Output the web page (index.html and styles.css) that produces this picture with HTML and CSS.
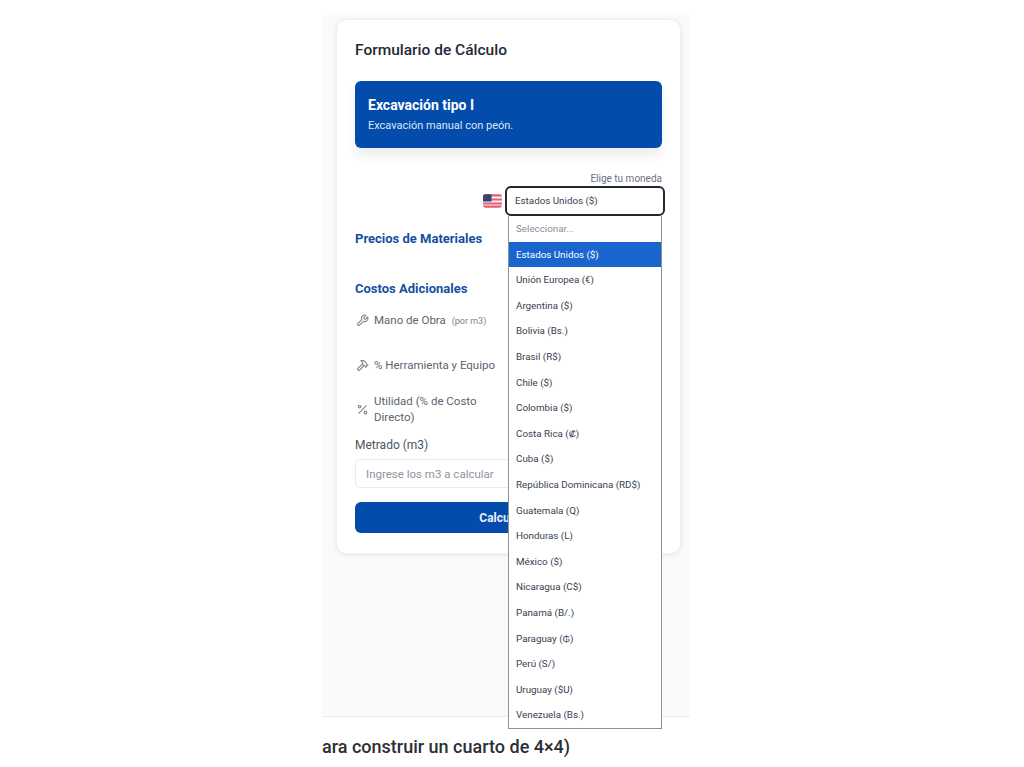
FILE: index.html
```html
<!DOCTYPE html>
<html lang="es">
<head>
    <meta charset="UTF-8">
    <meta name="viewport" content="width=device-width, initial-scale=1.0">
    <title>Formulario de Cálculo</title>
    <link rel="stylesheet" href="styles.css">
</head>
<body>
    <div class="frame">
        <div class="card">
            <h2 class="card-title">Formulario de Cálculo</h2>
            <div class="banner">
                <h3>Excavación tipo I</h3>
                <p>Excavación manual con peón.</p>
            </div>
            <div class="currency">
                <span class="currency-label">Elige tu moneda</span>
                <div class="currency-row">
                    <svg class="flag" viewBox="0 0 20 14">
                        <rect width="20" height="14" rx="2.5" fill="#f6f0f2"/>
                        <path d="M2.5 0h15A2.5 2.5 0 0 1 20 2.2H0A2.5 2.5 0 0 1 2.5 0zM0 4.4h20v2H0zM0 8.6h20v2H0zM0 11.8h20A2.5 2.5 0 0 1 17.5 14h-15A2.5 2.5 0 0 1 0 11.8z" fill="#e0606f"/>
                        <path d="M2.5 0H9v7.4H0V2.5A2.5 2.5 0 0 1 2.5 0z" fill="#34466f"/>
                    </svg>
                    <div class="select">Estados Unidos ($)
                        <ul class="menu">
                            <li class="placeholder">Seleccionar...</li>
                            <li class="active">Estados Unidos ($)</li>
                            <li>Unión Europea (€)</li>
                            <li>Argentina ($)</li>
                            <li>Bolivia (Bs.)</li>
                            <li>Brasil (R$)</li>
                            <li>Chile ($)</li>
                            <li>Colombia ($)</li>
                            <li>Costa Rica (₡)</li>
                            <li>Cuba ($)</li>
                            <li>República Dominicana (RD$)</li>
                            <li>Guatemala (Q)</li>
                            <li>Honduras (L)</li>
                            <li>México ($)</li>
                            <li>Nicaragua (C$)</li>
                            <li>Panamá (B/.)</li>
                            <li>Paraguay (₲)</li>
                            <li>Perú (S/)</li>
                            <li>Uruguay ($U)</li>
                            <li>Venezuela (Bs.)</li>
                        </ul>
                    </div>
                </div>
            </div>
            <h4 class="section materials">Precios de Materiales</h4>
            <h4 class="section costs">Costos Adicionales</h4>
            <div class="cost-row labor">
                <svg class="icon" viewBox="0 0 24 24"><path d="M14.7 6.3a1 1 0 0 0 0 1.4l1.6 1.6a1 1 0 0 0 1.4 0l3.77-3.77a6 6 0 0 1-7.94 7.94l-6.91 6.91a2.12 2.12 0 0 1-3-3l6.91-6.91a6 6 0 0 1 7.94-7.94l-3.76 3.76z"/></svg>
                <span>Mano de Obra <small>(por m3)</small></span>
            </div>
            <div class="cost-row tools">
                <svg class="icon" viewBox="0 0 24 24"><path d="m15 12-8.373 8.373a1 1 0 1 1-3-3L12 9"/><path d="m18 15 4-4"/><path d="m21.5 11.5-1.914-1.914A2 2 0 0 1 19 8.172V7l-2.26-2.26a6 6 0 0 0-4.202-1.756L9 2.96l.92.82A6.18 6.18 0 0 1 12 8.4V10l2 2h1.172a2 2 0 0 1 1.414.586L18.5 14.5"/></svg>
                <span>% Herramienta y Equipo</span>
            </div>
            <div class="cost-row profit">
                <svg class="icon" viewBox="0 0 24 24"><path d="M19 5 5 19"/><circle cx="6.5" cy="6.5" r="2.5"/><circle cx="17.5" cy="17.5" r="2.5"/></svg>
                <span>Utilidad (% de Costo<br>Directo)</span>
            </div>
            <label class="field-label" for="metrado">Metrado (m3)</label>
            <input class="field" id="metrado" type="text" placeholder="Ingrese los m3 a calcular">
            <button class="submit" type="button">Calcular</button>
        </div>
    </div>
    <p class="below">ara construir un cuarto de 4×4)</p>
</body>
</html>
```

FILE: styles.css
```css
* {
	box-sizing: border-box;
}
html, body {
	height: 100%;
}
body {
	margin: 0;
	background: #fff;
	font-family: Roboto, "Open Sans", sans-serif;
	color: #1f2937;
	overflow: hidden;
}
.frame {
	width: 368px;
	height: 702px;
	margin: 15px 0 0 322px;
	padding: 4px 9px 0 14px;
	background: #f8fafb;
	border-bottom: 1px solid #e9ecef;
}
.card {
	height: 535px;
	padding: 20px 18px 0;
	background: #fff;
	border: 1px solid #eceff3;
	border-radius: 10px;
	box-shadow: 0 1px 4px rgba(0, 0, 0, 0.08);
}
.card-title {
	margin: 0;
	font-size: 15.5px;
	line-height: 21px;
	font-weight: 500;
	color: #1f2937;
}
.banner {
	height: 67px;
	margin-top: 20px;
	padding: 14px 13px;
	background: #044cac;
	border-radius: 6px;
	color: #fff;
	box-shadow: 0 8px 12px rgba(0, 0, 0, 0.07);
}
.banner h3 {
	margin: 0;
	font-size: 14px;
	line-height: 20px;
	font-weight: 700;
}
.banner p {
	margin: 3px 0 0;
	font-size: 11px;
	line-height: 15px;
	color: #dbe7fb;
}
.currency {
	display: flex;
	flex-direction: column;
	align-items: flex-end;
	margin-top: 24px;
}
.currency-label {
	font-size: 10px;
	line-height: 13px;
	color: #6b7280;
}
.currency-row {
	display: flex;
	align-items: center;
	gap: 3px;
	margin: 1px -3px 0 0;
}
.flag {
	width: 19px;
	height: 14px;
}
.select {
	position: relative;
	width: 160px;
	height: 30px;
	padding-left: 8px;
	background: #fff;
	border: 2px solid #23272e;
	border-radius: 6px;
	font-size: 9.8px;
	line-height: 26px;
	color: #374151;
}
.menu {
	position: absolute;
	top: 28px;
	left: 1px;
	z-index: 2;
	width: 154px;
	margin: 0;
	padding: 0;
	list-style: none;
	background: #fff;
	border: 1px solid #8d9299;
	border-top: none;
}
.menu li {
	height: 25.6px;
	padding-left: 7px;
	font-size: 9.8px;
	line-height: 25.6px;
	color: #374151;
}
.menu .placeholder {
	color: #8a9099;
}
.menu .active {
	background: #1a64ce;
	color: #fff;
}
.section {
	margin: 0;
	font-size: 13px;
	line-height: 17px;
	font-weight: 700;
	color: #14509f;
}
.materials {
	margin-top: 14px;
}
.costs {
	margin-top: 33px;
}
.cost-row {
	display: flex;
	align-items: center;
	gap: 5px;
	padding-left: 1px;
	font-size: 11.5px;
	line-height: 16px;
	color: #5b6470;
}
.cost-row small {
	margin-left: 3px;
	font-size: 9px;
	color: #7b838e;
}
.labor {
	margin-top: 15px;
}
.tools {
	margin-top: 28px;
}
.profit {
	margin-top: 20px;
}
.icon {
	flex: none;
	width: 13px;
	height: 13px;
	fill: none;
	stroke: #7d8590;
	stroke-width: 2;
	stroke-linecap: round;
	stroke-linejoin: round;
}
.field-label {
	display: block;
	margin-top: 12px;
	font-size: 12px;
	line-height: 16px;
	color: #4b5563;
}
.field {
	display: block;
	width: 100%;
	height: 29px;
	margin-top: 6px;
	padding: 0 10px;
	background: #fff;
	border: 1px solid #e8ebef;
	border-radius: 5px;
	font-family: inherit;
	font-size: 11.5px;
}
.field::placeholder {
	color: #8d949e;
}
.submit {
	display: block;
	width: 100%;
	height: 31px;
	margin-top: 14px;
	padding: 0 14px 0 0;
	background: #044cac;
	border: none;
	border-radius: 6px;
	font-family: inherit;
	font-size: 12px;
	font-weight: 700;
	color: #e9f0fb;
}
.below {
	margin: 19px 0 0 322px;
	font-size: 18px;
	line-height: 22px;
	font-weight: 500;
	color: #2b2f36;
}
```
